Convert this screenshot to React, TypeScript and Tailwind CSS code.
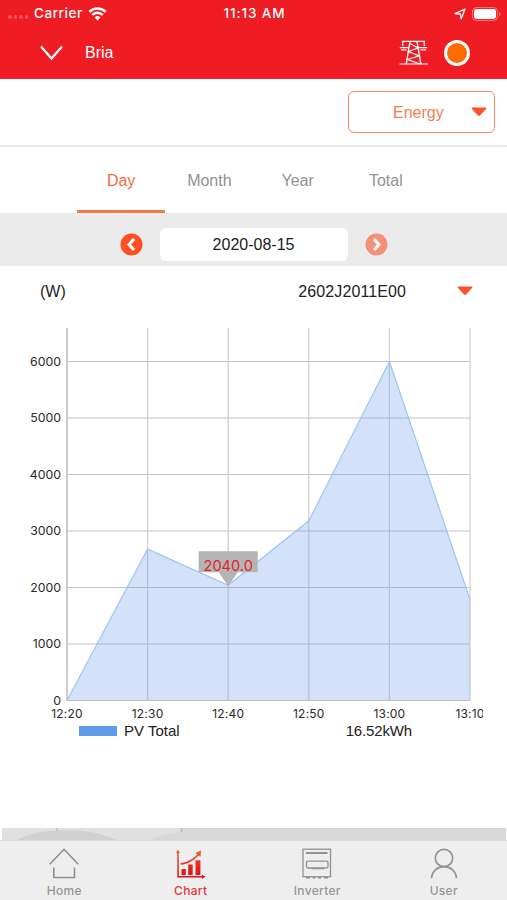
import React, { useState } from 'react';

const periods = ['Day', 'Month', 'Year', 'Total'];

const series = [
  { time: '12:20', value: 0 },
  { time: '12:30', value: 2680 },
  { time: '12:40', value: 2040 },
  { time: '12:50', value: 3180 },
  { time: '13:00', value: 6000 },
  { time: '13:10', value: 1790 },
];

const yTicks = [0, 1000, 2000, 3000, 4000, 5000, 6000];

const LEFT = 67;
const STEP = 80.6;
const BOTTOM = 384.5;
const toX = (i: number) => LEFT + i * STEP;
const toY = (value: number) => BOTTOM - (value / 1000) * 56.5;

const StatusBar: React.FC = () => (
  <div className="grid h-[27px] grid-cols-3 items-center pl-2 pr-[6px] font-[Inter,sans-serif] text-[13.5px] font-medium leading-none">
    <div className="flex items-center">
      <div className="mt-[7px] flex w-[26px] gap-[2px]">
        {[0, 1, 2, 3].map(i => (
          <span key={i} className="h-[3.5px] w-[3.5px] rounded-full bg-[#f5565b]" />
        ))}
      </div>
      <span className="tracking-[0.55px]">Carrier</span>
      <svg className="ml-[5px]" width="19" height="14" viewBox="0 0 20 15" fill="none" stroke="white" strokeWidth="2.6">
        <path d="M1.3 5.3a12.3 12.3 0 0 1 17.4 0" />
        <path d="M4.4 8.5a7.9 7.9 0 0 1 11.2 0" />
        <path d="M10 14.5 6.9 11.3a4.4 4.4 0 0 1 6.2 0Z" fill="white" stroke="none" />
      </svg>
    </div>
    <div className="whitespace-nowrap text-center tracking-[0.9px]">11:13 AM</div>
    <div className="flex items-center justify-end gap-[6px]">
      <svg width="12" height="12" viewBox="0 0 12 12" fill="none" stroke="white" strokeWidth="1.3" strokeLinejoin="round">
        <path d="M11 1 7.2 10.8 6.3 6 1 5.6Z" />
      </svg>
      <svg width="29" height="14" viewBox="0 0 29 14">
        <rect x="0.6" y="0.6" width="24.8" height="12.8" rx="3.6" fill="none" stroke="#f7787c" strokeWidth="1" />
        <rect x="2" y="2" width="22" height="10" rx="2.4" fill="white" />
        <path d="M27 4.7c2 .8 2 3.8 0 4.6Z" fill="#f7787c" />
      </svg>
    </div>
  </div>
);

const TowerIcon: React.FC = () => (
  <svg width="29" height="25" viewBox="0 0 29 25" fill="none" stroke="white" strokeWidth="1.2">
    <path d="M.5 24H29M3.7 6V1.4h21.6V6" />
    <path d="M11 1.5 7.2 24M18 1.5 21.800 24" strokeWidth="1.4" />
    <path d="M.8 7.600H9.5M19.5 7.600h8.7M2 9.800h5.5M21.5 9.800H27" />
    <path d="m11 3.500 8 4.500-9.500 3.500 10.500 4.500-11.500 3.500 12.500 4.500" />
  </svg>
);

const Caret: React.FC = () => (
  <svg width="16" height="10" viewBox="0 0 16 10" fill="#ff5126">
    <path d="M1.5.5h13c1 0 1.2.9.5 1.6L9 8.6c-.6.6-1.4.6-2 0L1 2.1C.3 1.4.5.5 1.5.5Z" />
  </svg>
);

const ArrowButton: React.FC<{ next?: boolean }> = ({ next }) => (
  <button type="button" className="h-[23px] w-[23px]" aria-label={next ? 'Next day' : 'Previous day'}>
    <svg width="23" height="23" viewBox="0 0 23 23" fill="none">
      <circle cx="11.5" cy="11.5" r="11" fill={next ? '#f49078' : '#ff5024'} />
      <path d={next ? 'm9 6 5 5.5L9 17' : 'm14 6-5 5.5 5 5.5'} stroke="white" strokeWidth="3" />
    </svg>
  </button>
);

const PowerChart: React.FC = () => {
  const line = series.map((p, i) => `${toX(i)},${toY(p.value)}`).join(' ');
  const marker = { x: toX(2), y: toY(2040) };

  return (
    <svg width="483" height="404" viewBox="0 0 483 404" className="block shrink-0 font-[Inter,sans-serif]">
      <g stroke="#c4c4c4" strokeWidth="1.2">
        {yTicks.map(t => (
          <line key={t} x1={LEFT} x2={toX(5)} y1={toY(t)} y2={toY(t)} />
        ))}
        {series.map((p, i) => (
          <line key={p.time} x1={toX(i)} x2={toX(i)} y1="12" y2={BOTTOM} stroke="#cecece" />
        ))}
      </g>
      <line x1={LEFT} x2={LEFT} y1="12" y2={BOTTOM} stroke="#b4b4b4" />
      <polygon points={`${LEFT},${BOTTOM} ${line} ${toX(5)},${BOTTOM}`} fill="#6ca0ec" fillOpacity="0.3" />
      <polyline points={line} fill="none" stroke="#a0c3f5" strokeWidth="1.2" />

      <g fontSize="12.3" fill="#2a2a2a" textAnchor="end">
        {yTicks.map(t => (
          <text key={t} x="61" y={toY(t) + 4}>{t}</text>
        ))}
      </g>
      <g fontSize="12" fill="#2a2a2a" textAnchor="middle" letterSpacing="0.2">
        {series.map((p, i) => (
          <text key={p.time} x={toX(i)} y="401.5">{p.time}</text>
        ))}
      </g>

      {/* selected value */}
      <path d={`M${marker.x - 29.5} ${marker.y - 34}h59v21h-20l-9.5 14-9.5-14h-20z`} fill="#b3b4b3" />
      <text x={marker.x} y={marker.y - 14.5} fontSize="14.6" fill="#e8212b" textAnchor="middle">2040.0</text>
    </svg>
  );
};

const HomeIcon = () => (
  <svg width="30" height="31" viewBox="0 0 30 31" fill="none" stroke="#929292" strokeWidth="1.6">
    <path d="M.7 16.3 15 1.5l14.3 14.8M4.8 19.5v10h20.7v-10" />
  </svg>
);

const ChartIcon = () => (
  <svg width="30" height="31" viewBox="0 0 30 31">
    <defs>
      <linearGradient id="heat" x1="0" y1="0" x2="0" y2="31" gradientUnits="userSpaceOnUse">
        <stop offset="0" stopColor="#ec6c36" />
        <stop offset="0.65" stopColor="#e71f1d" />
        <stop offset="1" stopColor="#e00d18" />
      </linearGradient>
    </defs>
    <g fill="url(#heat)">
      <path d="M1.3 4h1.5v24H26v-1.4l3.5 2.1-3.5 2.1v-1.3H1.3ZM0 5 2 1.500 4 5Z" />
      <path d="M5.5 21h4.3v6H5.500ZM12.200 16.500h4.500V27h-4.500ZM19.500 12.300h4.900V27h-4.900Z" />
      <path d="M4.500 15.300C11 14.300 17 11 21.200 6.500L19.500 5l5.500-2.500-.5 6.200-1.900-1.300C18 12.500 11.500 16 5 16.800Z" />
    </g>
  </svg>
);

const InverterIcon = () => (
  <svg width="30" height="31" viewBox="0 0 30 31" fill="none" stroke="#929292" strokeWidth="1.3">
    <rect x="1" y="1.2" width="27.5" height="27.5" />
    <path d="M4 5h21.500" strokeWidth="2" />
    <rect x="4.5" y="13.2" width="21.5" height="6.8" rx="1.500" />
    <path d="M9.500 20.500H22M4 29.800h4M10.500 29.800h3M16 29.800h3M22 29.800h4" strokeWidth="1.6" />
  </svg>
);

const UserIcon = () => (
  <svg width="30" height="31" viewBox="0 0 30 31" fill="none" stroke="#929292" strokeWidth="1.7">
    <circle cx="15" cy="10" r="8.7" />
    <path d="M2.5 30.3C3 23 8.5 18.7 15 18.7S27 23 27.5 30.3" />
  </svg>
);

const navItems = [
  { label: 'Home', icon: <HomeIcon /> },
  { label: 'Chart', icon: <ChartIcon /> },
  { label: 'Inverter', icon: <InverterIcon /> },
  { label: 'User', icon: <UserIcon /> },
];

export default function App() {
  const [period, setPeriod] = useState('Day');
  const [page, setPage] = useState('Chart');

  return (
    <div className="flex h-[900px] w-[507px] flex-col overflow-hidden bg-white font-['Liberation_Sans',sans-serif] text-base text-[#222]">
      <header className="h-[79px] shrink-0 bg-[#ef1c24] text-white">
        <StatusBar />
        <div className="flex h-[51px] items-center pl-10 pr-[37px]">
          <svg width="23" height="16" viewBox="0 0 23 16" fill="none" stroke="white" strokeWidth="2.2">
            <path d="m1 1.5 10.5 12L22 1.5" />
          </svg>
          <span className="ml-[22px] flex-1">Bria</span>
          <TowerIcon />
          <span className="ml-4 h-[26px] w-[26px] rounded-full border-[3px] border-white bg-[#ff6b00]" />
        </div>
      </header>

      <div className="flex h-[68px] shrink-0 items-center justify-end border-b-2 border-[#ececec] pr-3">
        <button type="button" className="flex h-[42px] w-[147px] items-center rounded-md border border-[#f58a65] pl-11 pr-[7px] text-[#f57d51]">
          <span className="flex-1 pt-px text-left">Energy</span>
          <Caret />
        </button>
      </div>

      <nav className="flex h-[66px] shrink-0 px-[77px]">
        {periods.map(p => (
          <button
            key={p}
            type="button"
            onClick={() => setPeriod(p)}
            className={`w-[88.5px] border-b-[3px] pt-[5px] ${
              p === period ? 'border-[#f57945] text-[#f8683e]' : 'border-transparent text-[#929292]'
            }`}
          >
            {p}
          </button>
        ))}
      </nav>

      <div className="flex h-[53px] shrink-0 items-center justify-center bg-[#ebebeb] pt-[10px]">
        <ArrowButton />
        <div className="mx-[17px] mb-[1px] flex h-[33px] w-[188px] items-center justify-center rounded-md bg-white">
          <span className="pt-px">2020-08-15</span>
        </div>
        <ArrowButton next />
      </div>

      <div className="flex h-[50px] shrink-0 items-center pl-10 pr-[34px]">
        <span className="flex-1 pt-0.5">(W)</span>
        <span className="mr-[51px] pt-0.5 tracking-[0.1px]">2602J2011E00</span>
        <Caret />
      </div>

      <PowerChart />

      <div className="flex h-[22px] shrink-0 items-center pl-[79px] pr-[95px] text-[15px]">
        <span className="h-[10px] w-[38px] bg-[#5f9bea]" />
        <span className="ml-[7px] flex-1">PV Total</span>
        <span className="tracking-[-0.15px]">16.52kWh</span>
      </div>

      <div className="flex-1" />

      {/* top edge of the next card */}
      <svg width="507" height="12" viewBox="0 0 507 12" className="block shrink-0">
        <path d="M2 0h504v12H2Z" fill="#d8d8d8" />
        <path d="M2 0h180v4c-12 1-24 4-32 8H116C90-2 38-1 17 12H2Z" fill="#e0e0e0" />
        <path d="M17 12C40 0 90-1 116 12Z" fill="#d1d1d1" />
        <path d="M57 0v3M181.5 0v4" stroke="#bdbdbd" strokeWidth="1.5" />
      </svg>

      <footer className="grid h-[60px] shrink-0 grid-cols-4 border-t border-[#dcdcdc] bg-[#eeeeee] pl-px font-[Inter,sans-serif] text-[12px] font-medium leading-none tracking-[0.3px]">
        {navItems.map(({ label, icon }) => (
          <button
            key={label}
            type="button"
            onClick={() => setPage(label)}
            className={`flex flex-col items-center pt-[7px] ${label === page ? 'text-[#e7343d]' : 'text-[#969696]'}`}
          >
            {icon}
            <span className="mt-[6px]">{label}</span>
          </button>
        ))}
      </footer>
    </div>
  );
}
